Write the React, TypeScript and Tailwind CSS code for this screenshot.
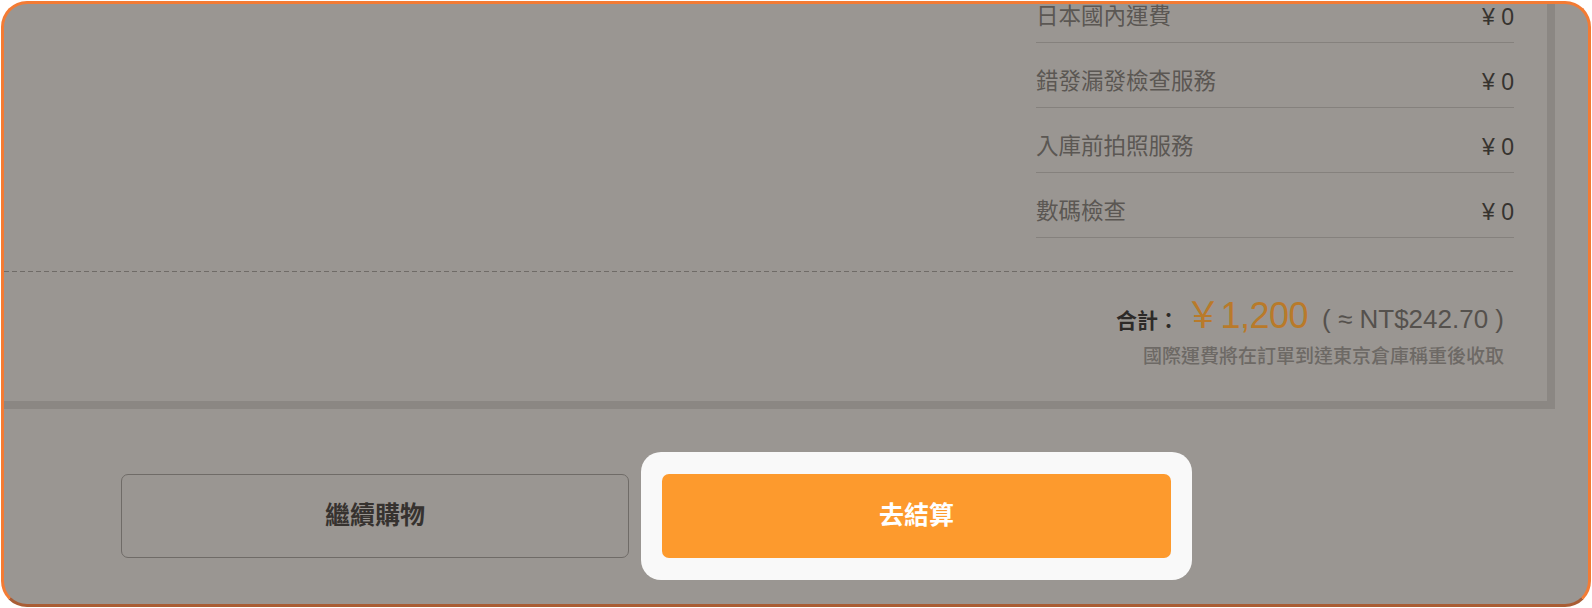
const fees = [
  { label: "日本國內運費", value: "¥ 0" },
  { label: "錯發漏發檢查服務", value: "¥ 0" },
  { label: "入庫前拍照服務", value: "¥ 0" },
  { label: "數碼檢查", value: "¥ 0" },
]

const App = () => {
  return (
    <div className="bg-white p-px font-['Liberation_Sans','Noto_Sans_CJK_TC',sans-serif]">
      <div className="h-[606px] rounded-[26px] border-[3px] border-[#f37b34] border-b-[#a95d35] bg-[#9a9692] overflow-hidden">
        {/* summary panel, scrolled so its top is cut off */}
        <div className="-mt-[26px] border-r-8 border-b-8 border-[#8b8783] w-[1551px] pr-[33px] pb-[32px]">
          <div className="ml-auto w-[478px]">
            {fees.map((fee) => (
              <div
                key={fee.label}
                className="flex justify-between items-center pt-[24px] pb-[10px] leading-[30px] border-b border-[#85817d]"
              >
                <span className="text-[22.5px] text-[#5b5753]">{fee.label}</span>
                <span className="text-[23px] text-[#36332f]">{fee.value}</span>
              </div>
            ))}
          </div>

          <div className="mt-[33px] h-px bg-[repeating-linear-gradient(to_right,#6f6b67_0_5px,transparent_5px_8px)]" />

          <div className="ml-auto w-[478px] pr-[10px]">
            <div className="mt-[20px] h-[48px] flex justify-end items-baseline leading-[48px]">
              <span className="text-[21px] font-bold text-[#2d2a28]">合計：</span>
              <span className="ml-[6px] text-[36px] tracking-[-0.5px] text-[#b97a2a]">￥1,200</span>
              <span className="ml-[14px] text-[26px] text-[#55514d]">( ≈ NT$242.70 )</span>
            </div>
            <div className="mt-[5px] text-right text-[19px] leading-[24px] font-medium text-[#6d6965]">
              國際運費將在訂單到達東京倉庫稱重後收取
            </div>
          </div>
        </div>

        <div className="mt-[43px] flex items-center pl-[117px]">
          <button className="w-[508px] h-[84px] rounded-[7px] border border-[#6f6b67] text-[25px] font-bold text-[#36322f]">
            繼續購物
          </button>
          <div className="ml-[12px] bg-[#f9f9f9] rounded-[20px] px-[21px] py-[22px]">
            <button className="w-[509px] h-[84px] rounded-[7px] bg-[#fd9a2d] text-[25px] font-bold text-white">
              去結算
            </button>
          </div>
        </div>
      </div>
    </div>
  )
}

export default App
